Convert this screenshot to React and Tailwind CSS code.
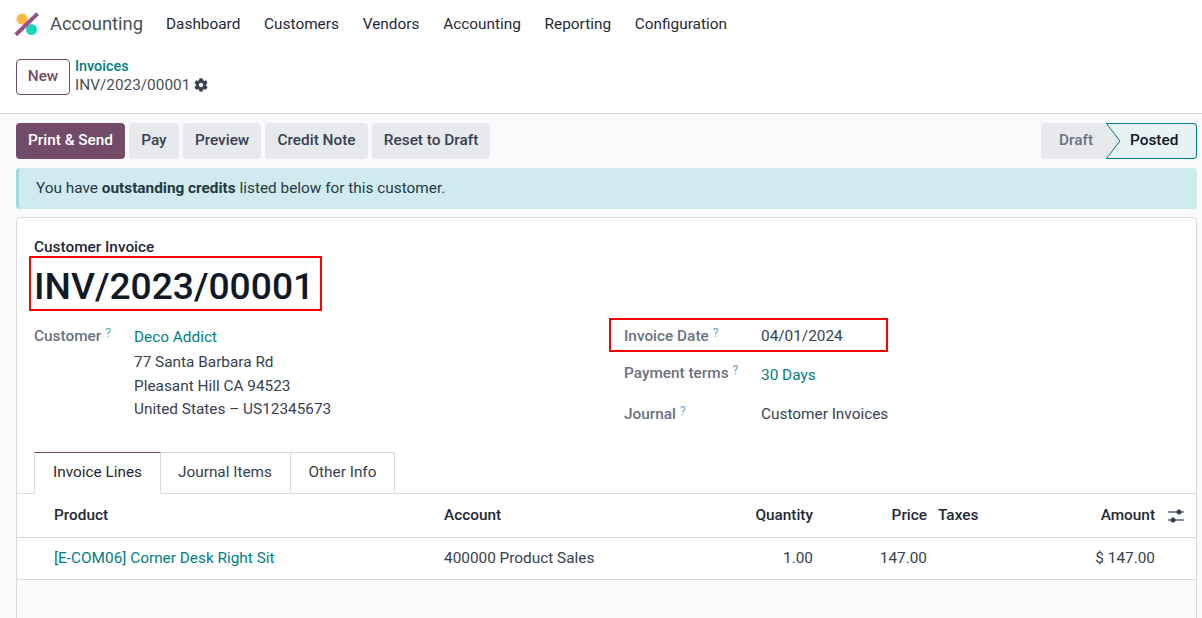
import { FaCog } from 'react-icons/fa';

const navItems = ['Dashboard', 'Customers', 'Vendors', 'Accounting', 'Reporting', 'Configuration'];
const actions = ['Pay', 'Preview', 'Credit Note', 'Reset to Draft'];

function Logo() {
  return (
    <svg width="26" height="26" viewBox="0 0 26 26">
      <circle cx="8" cy="8" r="5.5" fill="#fbb945" />
      <circle cx="17.5" cy="18.5" r="5.5" fill="#1ad3bb" />
      <path d="M1.8 23.8 L23.6 2.6" stroke="#985184" strokeWidth="4" />
    </svg>
  );
}

function Help() {
  return <sup className="text-[12px] text-[#5fa8c4] ml-1 relative top-[-4px] font-normal">?</sup>;
}

function SliderIcon() {
  return (
    <svg width="16" height="14" viewBox="0 0 16 14" fill="#374151">
      <rect x="0" y="2.4" width="16" height="1.2" />
      <rect x="0" y="10.4" width="16" height="1.2" />
      <circle cx="11" cy="3" r="2.5" />
      <circle cx="5" cy="11" r="2.5" />
    </svg>
  );
}

export default function App() {
  return (
    <div className="h-[618px] overflow-hidden bg-[#f9fafb] text-[15.36px] text-[#374151] font-['Roboto',sans-serif]">
      <header className="h-[48px] bg-white flex items-center pl-[14px]">
        <Logo />
        <span className="ml-[10px] text-[18.4px] text-[#495057] mr-[23px] -mt-[1px]">Accounting</span>
        <nav className="flex gap-[23.8px] text-[#1f2937] pt-[1px]">
          {navItems.map((item) => (
            <span key={item}>{item}</span>
          ))}
        </nav>
      </header>

      <div className="h-[66px] bg-white border-b border-[#d8dadd] flex pl-4 pt-[11px]">
        <button className="h-[36px] w-[54px] border border-[#714b67] rounded text-[#714b67] font-medium">New</button>
        <div className="ml-[5px] leading-[19px] -mt-[2px]">
          <div className="text-[#017e84] font-medium text-[14.4px]">Invoices</div>
          <div className="flex items-center gap-[4px] text-[#495057]">
            INV/2023/00001
            <FaCog size={14} color="#374151" className="-mt-[1px]" />
          </div>
        </div>
      </div>

      <div className="flex items-center justify-between pl-4 pr-[5px] pt-[9px]">
        <div className="flex gap-1">
          <button className="h-[36px] px-3 rounded bg-[#714b67] text-white font-medium">Print &amp; Send</button>
          {actions.map((a) => (
            <button key={a} className="h-[36px] px-[12.15px] rounded bg-[#e7e9ed] text-[#374151] font-medium">{a}</button>
          ))}
        </div>
        <div className="flex h-[36px]">
          <div className="w-[65px] bg-[#e7e9ed] rounded-l flex items-center pl-[18px] text-[#6b7280] font-medium">Draft</div>
          <div className="relative w-[91px] bg-[#e6f2f3] border border-[#017e84] border-l-0 rounded-r flex items-center pl-[24px] text-[#111827] font-medium">
            <svg className="absolute left-0 top-[-1px]" width="15" height="36" viewBox="0 0 15 36">
              <path d="M0 0 L14 18 L0 36 L0 36 Z" fill="#e7e9ed" />
              <path d="M0 0 L14 18 L0 36" fill="none" stroke="#017e84" strokeWidth="1" />
            </svg>
            Posted
          </div>
        </div>
      </div>

      <div className="mx-4 mr-[5px] mt-[9px] h-[41px] bg-[#d0ebef] border-l-[3px] border-[#a2d8df] rounded flex items-center pl-[17px] text-[#1f3a44]">
        <span>You have <b className="font-bold">outstanding credits</b> listed below for this customer.</span>
      </div>

      <div className="ml-4 mr-[5px] mt-[8px] h-[500px] bg-white border border-[#d8dadd] rounded-t">
        <div className="pl-[17px] pt-[20px] font-medium leading-[18px] text-[#1f2937]">Customer Invoice</div>
        <div className="ml-[12px] w-[293px] h-[55px] border-2 border-[#ff0000] flex items-center pl-[3px] pt-[7px] text-[37.2px] font-medium text-[#111827] leading-none">
          INV/2023/00001
        </div>

        <div className="grid grid-cols-[577px_1fr] mt-[6px]">
          <div className="pl-[17px] flex">
            <div className="w-[100px] pt-[8px] font-medium text-[#6b7280] leading-[22px]">Customer<Help /></div>
            <div className="pt-[8px] leading-[24px]">
              <div className="text-[#017e84] mb-[1px]">Deco Addict</div>
              <div>77 Santa Barbara Rd</div>
              <div>Pleasant Hill CA 94523</div>
              <div className="-mt-[1px]">United States – US12345673</div>
            </div>
          </div>
          <div className="pt-[1px]">
            <div className="w-[279px] h-[34px] ml-[15px] border-2 border-[#ff0000] flex items-center pl-[13px] pt-[3px]">
              <div className="w-[137px] font-medium text-[#6b7280]">Invoice Date<Help /></div>
              <div>04/01/2024</div>
            </div>
            <div className="flex pl-[30px] mt-[10px] items-start">
              <div className="w-[137px] font-medium text-[#6b7280]">Payment terms<Help /></div>
              <div className="text-[#017e84] pt-[2px]">30 Days</div>
            </div>
            <div className="flex pl-[30px] mt-[16px] items-center">
              <div className="w-[137px] font-medium text-[#6b7280]">Journal<Help /></div>
              <div>Customer Invoices</div>
            </div>
          </div>
        </div>

        <div className="mt-[26px] pl-[17px] h-[42px] flex border-b border-[#d8dadd]">
          <div className="w-[127px] h-[42px] pb-[2px] bg-white border border-[#d8dadd] border-t-[#714b67] border-b-white flex items-center justify-center text-[#1f2937]">Invoice Lines</div>
          <div className="w-[130px] h-[41px] pb-[2px] pr-[1px] border-t border-r border-[#d8dadd] flex items-center justify-center">Journal Items</div>
          <div className="w-[104px] h-[41px] pb-[2px] border-t border-r border-[#d8dadd] flex items-center justify-center">Other Info</div>
        </div>

        <div className="flex items-center h-[44px] border-b border-[#d8dadd] font-medium text-[#1f2937]">
          <div className="w-[427px] pl-[37px]">Product</div>
          <div className="w-[260px]">Account</div>
          <div className="w-[109px] text-right">Quantity</div>
          <div className="w-[114px] text-right">Price</div>
          <div className="w-[118px] pl-[11px]">Taxes</div>
          <div className="w-[110px] text-right">Amount</div>
          <div className="ml-[13px]"><SliderIcon /></div>
        </div>
        <div className="flex items-center h-[42px] border-b border-[#d8dadd]">
          <div className="w-[427px] pl-[37px] text-[#017e84]">[E-COM06] Corner Desk Right Sit</div>
          <div className="w-[260px]">400000 Product Sales</div>
          <div className="w-[109px] text-right">1.00</div>
          <div className="w-[114px] text-right">147.00</div>
          <div className="w-[118px]"></div>
          <div className="w-[110px] text-right">$ 147.00</div>
        </div>
        <div className="h-[40px] bg-[#fafafa]"></div>
      </div>
    </div>
  );
}
